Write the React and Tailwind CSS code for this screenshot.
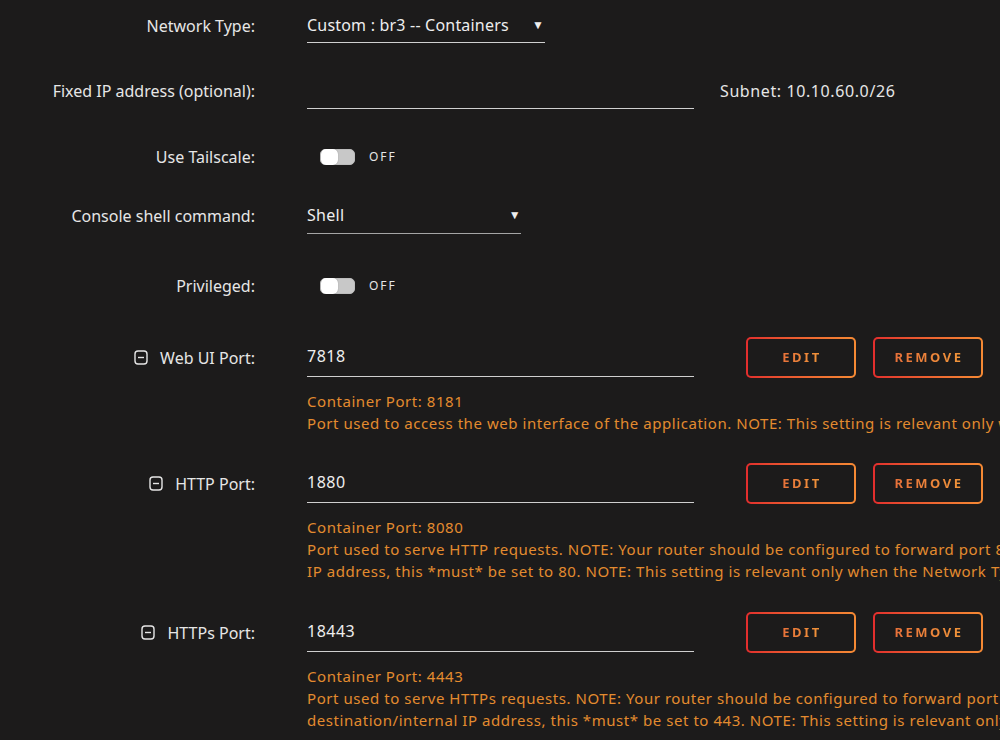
import React from 'react';

const font = { fontFamily: '"Noto Sans", "Open Sans", sans-serif' };

function Label({ children, minus }) {
  return (
    <div className="flex items-center justify-end gap-3 text-[16px] text-[#e6e6e6]">
      {minus && (
        <svg width="14" height="15" viewBox="0 0 14 15" fill="none" className="shrink-0">
          <rect x="1" y="1" width="12" height="13" rx="3" stroke="#e6e6e6" strokeWidth="1.4" />
          <line x1="4" y1="7.5" x2="10" y2="7.5" stroke="#e6e6e6" strokeWidth="1.4" />
        </svg>
      )}
      <span>{children}</span>
    </div>
  );
}

function Toggle() {
  return (
    <div className="flex items-center gap-[14px]">
      <div className="relative w-[35px] h-[16px] rounded-[5px] bg-[#c8c8c8] border border-[#bdbdbd]">
        <div className="absolute left-0 top-[-1px] w-[17px] h-[16px] rounded-[5px] bg-white shadow-[0_0_1px_rgba(0,0,0,0.4)]" />
      </div>
      <span className="text-[12px] tracking-[2px] text-[#e6e6e6]">OFF</span>
    </div>
  );
}

function GradButton({ children }) {
  return (
    <div className="w-[110px] h-[41px] rounded-[5px] p-[2px] bg-gradient-to-r from-[#e22d2d] to-[#f58a34]">
      <div className="w-full h-full rounded-[3px] bg-[#1c1b1b] flex items-center justify-center">
        <span className="text-[13px] font-bold tracking-[2.5px] pl-[2px] bg-gradient-to-r from-[#e7703a] to-[#f0953a] bg-clip-text text-transparent">
          {children}
        </span>
      </div>
    </div>
  );
}

function PortRow({ label, value, container, lines, mt }) {
  return (
    <>
      <div className={`grid grid-cols-[255px_1fr] gap-x-[52px] ${mt}`}>
        <Label minus>{label}</Label>
        <div className="flex items-center">
          <div className="w-[387px] h-[38px] pb-[3px] border-b-[1.5px] border-[#cfcfcf] flex items-center text-[16px] tracking-[0.5px] text-[#eeeeee]">
            {value}
          </div>
          <div className="flex gap-[17px] ml-[52px]">
            <GradButton>EDIT</GradButton>
            <GradButton>REMOVE</GradButton>
          </div>
        </div>
      </div>
      <div className="pl-[307px] mt-[12px] text-[15px] leading-[22px] tracking-[0.55px] text-[#e38b2f] whitespace-nowrap">
        <div>Container Port: {container}</div>
        {lines.map((l, i) => (
          <div key={i}>{l}</div>
        ))}
      </div>
    </>
  );
}

export default function App() {
  return (
    <div className="w-[1000px] h-[740px] overflow-hidden bg-[#1c1b1b]" style={font}>
      {/* Network type */}
      <div className="grid grid-cols-[255px_1fr] gap-x-[52px] pt-[8px]">
        <Label>Network Type:</Label>
        <div className="w-[238px] h-[35px] border-b-[1.5px] border-[#d0d0d0] flex items-center justify-between text-[16px] tracking-[0.2px] text-[#eeeeee]">
          <span>Custom : br3 -- Containers</span>
          <span className="text-[12px] mr-[1px]">▼</span>
        </div>
      </div>

      {/* Fixed IP */}
      <div className="grid grid-cols-[255px_1fr] gap-x-[52px] mt-[29px]">
        <Label>Fixed IP address (optional):</Label>
        <div className="flex items-center">
          <div className="w-[387px] h-[37px] border-b-[1.5px] border-[#d0d0d0]" />
          <span className="ml-[26px] text-[16px] tracking-[0.6px] text-[#e6e6e6]">Subnet: 10.10.60.0/26</span>
        </div>
      </div>

      {/* Tailscale */}
      <div className="grid grid-cols-[255px_1fr] gap-x-[52px] mt-[31px] h-[34px] items-center">
        <Label>Use Tailscale:</Label>
        <div className="pl-[13px]"><Toggle /></div>
      </div>

      {/* Console shell */}
      <div className="grid grid-cols-[255px_1fr] gap-x-[52px] mt-[23px]">
        <Label>Console shell command:</Label>
        <div className="w-[214px] h-[37px] border-b-[1.5px] border-[#a5a5a5] flex items-center justify-between text-[16px] tracking-[0.3px] text-[#eeeeee]">
          <span>Shell</span>
          <span className="text-[12px]">▼</span>
        </div>
      </div>

      {/* Privileged */}
      <div className="grid grid-cols-[255px_1fr] gap-x-[52px] mt-[35px] h-[34px] items-center">
        <Label>Privileged:</Label>
        <div className="pl-[13px]"><Toggle /></div>
      </div>

      <PortRow
        mt="mt-[34px]"
        label="Web UI Port:"
        value="7818"
        container="8181"
        lines={[
          'Port used to access the web interface of the application. NOTE: This setting is relevant only when the Network Type is set to Bridge.',
        ]}
      />
      <PortRow
        mt="mt-[29px]"
        label="HTTP Port:"
        value="1880"
        container="8080"
        lines={[
          'Port used to serve HTTP requests. NOTE: Your router should be configured to forward port 80 to this port. When using a custom network with a destination/internal',
          'IP address, this *must* be set to 80. NOTE: This setting is relevant only when the Network Type is set to Bridge.',
        ]}
      />
      <PortRow
        mt="mt-[30px]"
        label="HTTPs Port:"
        value="18443"
        container="4443"
        lines={[
          'Port used to serve HTTPs requests. NOTE: Your router should be configured to forward port 443 to this port. When using a custom network with a',
          'destination/internal IP address, this *must* be set to 443. NOTE: This setting is relevant only when the Network Type is set to Bridge.',
        ]}
      />
    </div>
  );
}
